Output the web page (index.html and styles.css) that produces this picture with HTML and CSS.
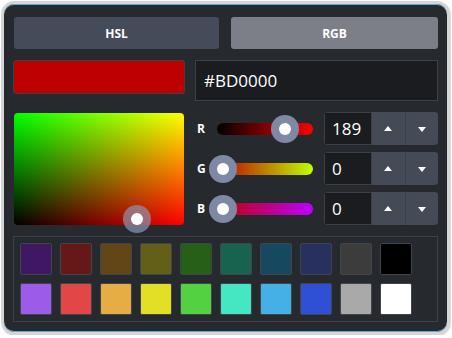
FILE: index.html
```html
<!DOCTYPE html>
<html lang="en">
<head>
    <meta charset="UTF-8">
    <title>Color Picker</title>
    <link rel="stylesheet" href="styles.css">
</head>
<body>
    <div class="picker">
        <div class="tabs">
            <button class="tab">HSL</button>
            <button class="tab active">RGB</button>
        </div>

        <div class="top-row">
            <div class="preview"></div>
            <input class="hex" type="text" value="#BD0000">
        </div>

        <div class="main">
            <div class="area">
                <div class="knob area-knob" style="left: 109px; top: 92px;"><span></span></div>
            </div>

            <div class="channels">
                <div class="channel">
                    <span class="label">R</span>
                    <div class="track track-r">
                        <div class="knob" style="left: 54px;"><span></span></div>
                    </div>
                    <div class="spin">
                        <input type="text" value="189">
                        <button class="up"></button>
                        <button class="down"></button>
                    </div>
                </div>
                <div class="channel">
                    <span class="label">G</span>
                    <div class="track track-g">
                        <div class="knob" style="left: -8px;"><span></span></div>
                    </div>
                    <div class="spin">
                        <input type="text" value="0">
                        <button class="up"></button>
                        <button class="down"></button>
                    </div>
                </div>
                <div class="channel">
                    <span class="label">B</span>
                    <div class="track track-b">
                        <div class="knob" style="left: -8px;"><span></span></div>
                    </div>
                    <div class="spin">
                        <input type="text" value="0">
                        <button class="up"></button>
                        <button class="down"></button>
                    </div>
                </div>
            </div>
        </div>

        <div class="palette">
            <div class="swatch" style="background: #3f1763;"></div>
            <div class="swatch" style="background: #661818;"></div>
            <div class="swatch" style="background: #634617;"></div>
            <div class="swatch" style="background: #635e18;"></div>
            <div class="swatch" style="background: #265f17;"></div>
            <div class="swatch" style="background: #18634f;"></div>
            <div class="swatch" style="background: #164860;"></div>
            <div class="swatch" style="background: #27305f;"></div>
            <div class="swatch" style="background: #3c3c3c;"></div>
            <div class="swatch" style="background: #000000;"></div>
            <div class="swatch" style="background: #9c5ce9;"></div>
            <div class="swatch" style="background: #e34646;"></div>
            <div class="swatch" style="background: #e5ad43;"></div>
            <div class="swatch" style="background: #e3df26;"></div>
            <div class="swatch" style="background: #53d141;"></div>
            <div class="swatch" style="background: #45e6c2;"></div>
            <div class="swatch" style="background: #45b0e6;"></div>
            <div class="swatch" style="background: #2f50d4;"></div>
            <div class="swatch" style="background: #a9a9a9;"></div>
            <div class="swatch" style="background: #ffffff;"></div>
        </div>
    </div>
</body>
</html>
```

FILE: styles.css
```css
body {
    margin: 0;
    padding: 1px 0 0 1px;
    background-color: #ffffff;
    font-family: "Open Sans", "Noto Sans", sans-serif;
}

.picker {
    width: 443px;
    height: 328px;
    box-sizing: content-box;
    border: 3px solid #d5d5d5;
    border-radius: 13px;
    background-color: #262a2f;
    box-shadow: inset 0 1px #5aa8d6, inset 0 -1px #5aa8d6, 1px 1px 1px rgba(0, 0, 0, 0.15);
    padding: 0;
}

.tabs {
    display: grid;
    grid-template-columns: 205px 207px;
    gap: 12px;
    margin: 13px 0 0 10px;
}

.tab {
    height: 32px;
    border: none;
    border-radius: 3px;
    background-color: #454b59;
    color: #ffffff;
    font-family: inherit;
    font-size: 12px;
    font-weight: bold;
    padding: 0;
}

.tab.active {
    background-color: #7c7f88;
}

.top-row {
    display: flex;
    gap: 10px;
    margin: 11px 0 0 9px;
    align-items: flex-start;
}

.preview {
    width: 170px;
    height: 32px;
    background-color: #bd0000;
    border: 1px solid #3b4049;
    border-radius: 3px;
}

.hex {
    height: 39px;
    box-sizing: content-box;
    padding: 0 0 0 8px;
    margin: 0;
    border: 1px solid #3b4049;
    background-color: #1b1c1f;
    color: #ffffff;
    font-family: inherit;
    font-size: 17px;
    outline: none;
    width: 233px;
}

.main {
    display: flex;
    gap: 11px;
    margin: 11px 0 0 10px;
    align-items: flex-start;
}

.area {
    position: relative;
    width: 170px;
    height: 112px;
    margin-top: 1px;
    border-radius: 4px;
    background-image: linear-gradient(to bottom, #00ff00, #000000), linear-gradient(to right, #000000, #ff0000);
    background-blend-mode: lighten;
}

.knob {
    position: absolute;
    width: 28px;
    height: 28px;
    border-radius: 50%;
    background-color: #7f89a3;
    display: flex;
    align-items: center;
    justify-content: center;
    top: -8px;
}

.knob span {
    width: 12px;
    height: 12px;
    border-radius: 50%;
    background-color: #ffffff;
}

.area-knob {
    background-color: rgba(140, 150, 175, 0.7);
}

.channels {
    display: flex;
    flex-direction: column;
    gap: 7px;
}

.channel {
    display: flex;
    align-items: center;
    height: 33px;
}

.label {
    width: 20px;
    padding-left: 2px;
    color: #ffffff;
    font-size: 12px;
    font-weight: bold;
}

.track {
    position: relative;
    width: 96px;
    height: 12px;
    border-radius: 6px;
    margin-right: 11px;
}

.track-r {
    background: linear-gradient(to right, #000000, #ff0000);
}

.track-g {
    background: linear-gradient(to right, #bd0000, #bdff00);
}

.track-b {
    background: linear-gradient(to right, #bd0000, #bd00ff);
}

.spin {
    display: flex;
    width: 114px;
    height: 33px;
    border-radius: 4px;
    overflow: hidden;
    background-color: #454a57;
}

.spin input {
    width: 39px;
    height: 31px;
    margin: 0;
    padding: 0 0 0 7px;
    border: 1px solid #3b4049;
    background-color: #1b1c1f;
    color: #ffffff;
    font-family: inherit;
    font-size: 17px;
    outline: none;
}

.spin button {
    position: relative;
    width: 33px;
    height: 33px;
    padding: 0;
    border: none;
    background-color: #454a57;
}

.spin .up {
    border-right: 1px solid #3a3f4a;
    width: 34px;
}

.spin button::after {
    content: "";
    position: absolute;
    left: 50%;
    top: 50%;
    margin-left: -4px;
    margin-top: -2px;
    border-left: 4px solid transparent;
    border-right: 4px solid transparent;
}

.spin .up::after {
    border-bottom: 5px solid #ffffff;
    margin-top: -3px;
}

.spin .down::after {
    border-top: 5px solid #ffffff;
}

.palette {
    display: grid;
    grid-template-columns: repeat(10, 32px);
    grid-auto-rows: 32px;
    gap: 8px;
    width: 411px;
    margin: 11px 0 0 9px;
    padding: 6px;
    border: 1px solid #3b4049;
}

.swatch {
    box-sizing: border-box;
    border: 1px solid #3f444d;
    border-radius: 2px;
}
```
